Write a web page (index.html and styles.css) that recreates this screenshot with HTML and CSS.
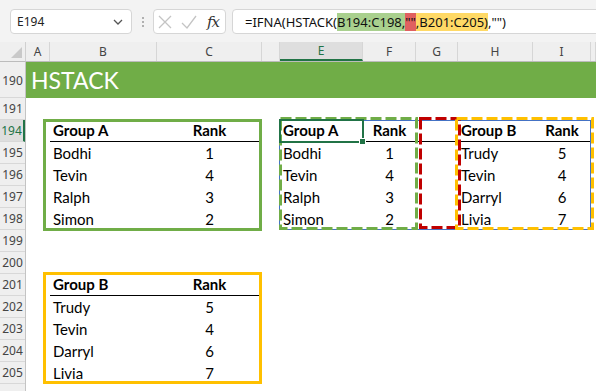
FILE: index.html
```html
<!DOCTYPE html>
<html lang="en">

<head>
  <meta charset="UTF-8">
  <meta name="viewport" content="width=device-width, initial-scale=1.0">
  <title>HSTACK</title>
  <link rel="stylesheet" href="styles.css">
</head>

<body>
  <div class="toolbar">
    <div class="namebox">
      <span>E194</span>
      <svg class="chevron" width="10" height="6" viewBox="0 0 10 6"><path d="M1 1l4 4 4-4" /></svg>
    </div>
    <div class="grip"><i></i><i></i><i></i></div>
    <div class="fxbox">
      <svg class="btn" width="14" height="14" viewBox="0 0 14 14"><path d="M1 1l12 12M13 1L1 13" /></svg>
      <svg class="btn" width="16" height="14" viewBox="0 0 16 14"><path d="M1 8l5 5L15 1" /></svg>
      <span class="fx">fx</span>
    </div>
    <div class="formula">=IFNA(HSTACK(<span class="ref-a">B194:C198,</span><span class="ref-gap">""</span><span class="ref-b">,B201:C205)</span>,"")</div>
  </div>

  <div class="sheet">
    <div class="corner"><span class="tri"></span></div>
    <div class="colheads">
      <div class="ch">A</div>
      <div class="ch">B</div>
      <div class="ch">C</div>
      <div class="ch"></div>
      <div class="ch current">E</div>
      <div class="ch">F</div>
      <div class="ch">G</div>
      <div class="ch">H</div>
      <div class="ch">I</div>
      <div class="ch"></div>
    </div>
    <div class="rowheads">
      <div class="rh tall">190</div>
      <div class="rh">191</div>
      <div class="rh current">194</div>
      <div class="rh">195</div>
      <div class="rh">196</div>
      <div class="rh">197</div>
      <div class="rh">198</div>
      <div class="rh">199</div>
      <div class="rh">200</div>
      <div class="rh">201</div>
      <div class="rh">202</div>
      <div class="rh">203</div>
      <div class="rh">204</div>
      <div class="rh">205</div>
      <div class="rh"></div>
    </div>

    <div class="cells">
      <div class="title">HSTACK</div>

      <!-- source tables -->
      <div class="tbl tbl-a">
        <div class="c hd">Group A</div><div class="c hd num">Rank</div>
        <div class="c">Bodhi</div><div class="c num">1</div>
        <div class="c">Tevin</div><div class="c num">4</div>
        <div class="c">Ralph</div><div class="c num">3</div>
        <div class="c">Simon</div><div class="c num">2</div>
      </div>
      <div class="box box-a"></div>

      <div class="tbl tbl-b">
        <div class="c hd">Group B</div><div class="c hd num">Rank</div>
        <div class="c">Trudy</div><div class="c num">5</div>
        <div class="c">Tevin</div><div class="c num">4</div>
        <div class="c">Darryl</div><div class="c num">6</div>
        <div class="c">Livia</div><div class="c num">7</div>
      </div>
      <div class="box box-b"></div>

      <!-- spilled result -->
      <div class="tbl tbl-spill">
        <div class="c hd">Group A</div><div class="c hd num">Rank</div><div class="c hd"></div><div class="c hd">Group B</div><div class="c hd num">Rank</div>
        <div class="c">Bodhi</div><div class="c num">1</div><div class="c"></div><div class="c">Trudy</div><div class="c num">5</div>
        <div class="c">Tevin</div><div class="c num">4</div><div class="c"></div><div class="c">Tevin</div><div class="c num">4</div>
        <div class="c">Ralph</div><div class="c num">3</div><div class="c"></div><div class="c">Darryl</div><div class="c num">6</div>
        <div class="c">Simon</div><div class="c num">2</div><div class="c"></div><div class="c">Livia</div><div class="c num">7</div>
      </div>
      <div class="spill-border"></div>
      <div class="active-cell"></div>

      <div class="dash dash-a"><svg><rect /></svg></div>
      <div class="dash dash-gap"><svg><rect /></svg></div>
      <div class="dash dash-b"><svg><rect /></svg></div>
    </div>
  </div>
</body>

</html>
```

FILE: styles.css
```css
:root {
  --cols: 24px 107px 105px 18px 83px 53px 42px 75px 58px 1fr;
  --green: #70ad47;
  --yellow: #ffc000;
  --red: #c00000;
  --excel: #217346;
}

html,
body {
  margin: 0;
  height: 100%;
  overflow: hidden;
  background: #fff;
}

body {
  font-family: "Noto Sans", sans-serif;
  color: #222;
}

/* formula bar */

.toolbar {
  height: 42px;
  background: #f3f3f3;
  display: flex;
  align-items: flex-start;
  padding: 9px 0 0 10px;
  box-sizing: border-box;
}

.namebox,
.fxbox,
.formula {
  height: 25px;
  box-sizing: border-box;
  background: #fff;
  border: 1px solid #d6d6d6;
  border-radius: 4px;
  display: flex;
  align-items: center;
}

.namebox {
  width: 122px;
  padding: 0 8px 0 6px;
  justify-content: space-between;
  font-size: 12px;
}

.chevron path {
  fill: none;
  stroke: #555;
  stroke-width: 1.3;
}

.grip {
  width: 21px;
  height: 25px;
  display: flex;
  flex-direction: column;
  align-items: center;
  justify-content: center;
  gap: 2px;
}

.grip i {
  width: 2px;
  height: 2px;
  border-radius: 1px;
  background: #9a9a9a;
}

.fxbox {
  width: 73px;
  padding: 0 6px 0 4px;
  justify-content: space-between;
}

.btn path {
  fill: none;
  stroke: #c4c4c4;
  stroke-width: 1.3;
}

.fx {
  font-family: "DejaVu Serif", serif;
  font-style: italic;
  font-size: 15px;
  color: #333;
  letter-spacing: -1px;
}

.formula {
  flex: 1;
  margin: 0 -10px 0 6px;
  padding-left: 12px;
  font-size: 13px;
  white-space: nowrap;
  color: #111;
}

.ref-a {
  background: #a9d08e;
}

.ref-gap {
  background: #e06060;
}

.ref-b {
  background: #ffd966;
}

/* sheet */

.sheet {
  display: grid;
  grid-template-columns: 26px 1fr;
  grid-template-rows: 20px 1fr;
}

.corner {
  background: #efefef;
  border-bottom: 1px solid #bcbcbc;
  border-right: 1px solid #d0d0d0;
  box-sizing: border-box;
  display: flex;
  justify-content: flex-end;
  align-items: flex-end;
  padding: 0 3px 3px 0;
}

.tri {
  width: 11px;
  height: 11px;
  background: #c9c9c9;
  clip-path: polygon(100% 0, 100% 100%, 0 100%);
}

.colheads {
  display: grid;
  grid-template-columns: var(--cols);
  background: #efefef;
  border-bottom: 1px solid #bcbcbc;
}

.ch {
  border-right: 1px solid #d6d6d6;
  font-size: 12px;
  line-height: 19px;
  text-align: center;
  color: #444;
}

.ch.current {
  background: #dedede;
  color: var(--excel);
  border-bottom: 2px solid var(--excel);
  line-height: 17px;
}

.rowheads {
  display: flex;
  flex-direction: column;
  background: #efefef;
  border-right: 1px solid #c4c4c4;
}

.rh {
  height: 22px;
  box-sizing: border-box;
  border-bottom: 1px solid #d8d8d8;
  font-size: 12px;
  line-height: 22px;
  text-align: center;
  color: #444;
}

.rh.tall {
  height: 36px;
  line-height: 38px;
}

.rh.current {
  background: #dedede;
  color: var(--excel);
  border-right: 2px solid var(--excel);
}

.cells {
  display: grid;
  grid-template-columns: var(--cols);
  grid-template-rows: 36px repeat(14, 22px);
  font-family: Lato, sans-serif;
  font-size: 15px;
  color: #000;
}

.title {
  grid-column: 1 / -1;
  grid-row: 1;
  background: var(--green);
  color: #fff;
  font-size: 23px;
  line-height: 37px;
  padding-left: 5px;
}

.tbl {
  display: grid;
  grid-auto-rows: 22px;
}

.tbl-a {
  grid-column: 2 / 4;
  grid-row: 3 / 8;
  grid-template-columns: 107px 105px;
}

.tbl-b {
  grid-column: 2 / 4;
  grid-row: 10 / 15;
  grid-template-columns: 107px 105px;
}

.tbl-spill {
  grid-column: 5 / 10;
  grid-row: 3 / 8;
  grid-template-columns: 83px 53px 42px 75px 58px;
}

.c {
  line-height: 22px;
  padding-left: 3px;
  white-space: nowrap;
}

.c.num {
  text-align: center;
  padding-left: 0;
}

.c.hd {
  font-weight: bold;
  border-bottom: 1px solid #000;
  line-height: 21px;
}

.box {
  grid-column: 2 / 4;
  border: 3px solid var(--green);
}

.box-a {
  grid-row: 3 / 8;
  margin: -1px 0 -1px -7px;
}

.box-b {
  grid-row: 10 / 15;
  border-color: var(--yellow);
  margin: -2px 0 0 -7px;
}

.spill-border {
  grid-column: 5 / 10;
  grid-row: 3 / 8;
  border: 1px solid #4472c4;
  margin-left: -1px;
}

.active-cell {
  grid-column: 5 / 6;
  grid-row: 3 / 4;
  border: 2px solid var(--excel);
  margin: -1px;
  position: relative;
}

.active-cell::after {
  content: "";
  position: absolute;
  right: -4px;
  bottom: -4px;
  width: 5px;
  height: 5px;
  background: var(--excel);
  border: 1px solid #fff;
}

.dash {
  grid-row: 3 / 8;
}

.dash svg {
  display: block;
  width: 100%;
  height: 100%;
}

.dash rect {
  x: 1.5px;
  y: 1.5px;
  width: calc(100% - 3px);
  height: calc(100% - 3px);
  fill: none;
  stroke-width: 3;
  stroke-dasharray: 11 4;
}

.dash-a {
  grid-column: 5 / 7;
  margin: -3px -2px 0 -1px;
}

.dash-a rect {
  stroke: var(--green);
}

.dash-gap {
  grid-column: 7 / 8;
  margin: -3px -3px 1px 3px;
}

.dash-gap rect {
  stroke: var(--red);
}

.dash-b {
  grid-column: 8 / 10;
  margin: -3px -3px 0 -3px;
}

.dash-b rect {
  stroke: var(--yellow);
}
```
